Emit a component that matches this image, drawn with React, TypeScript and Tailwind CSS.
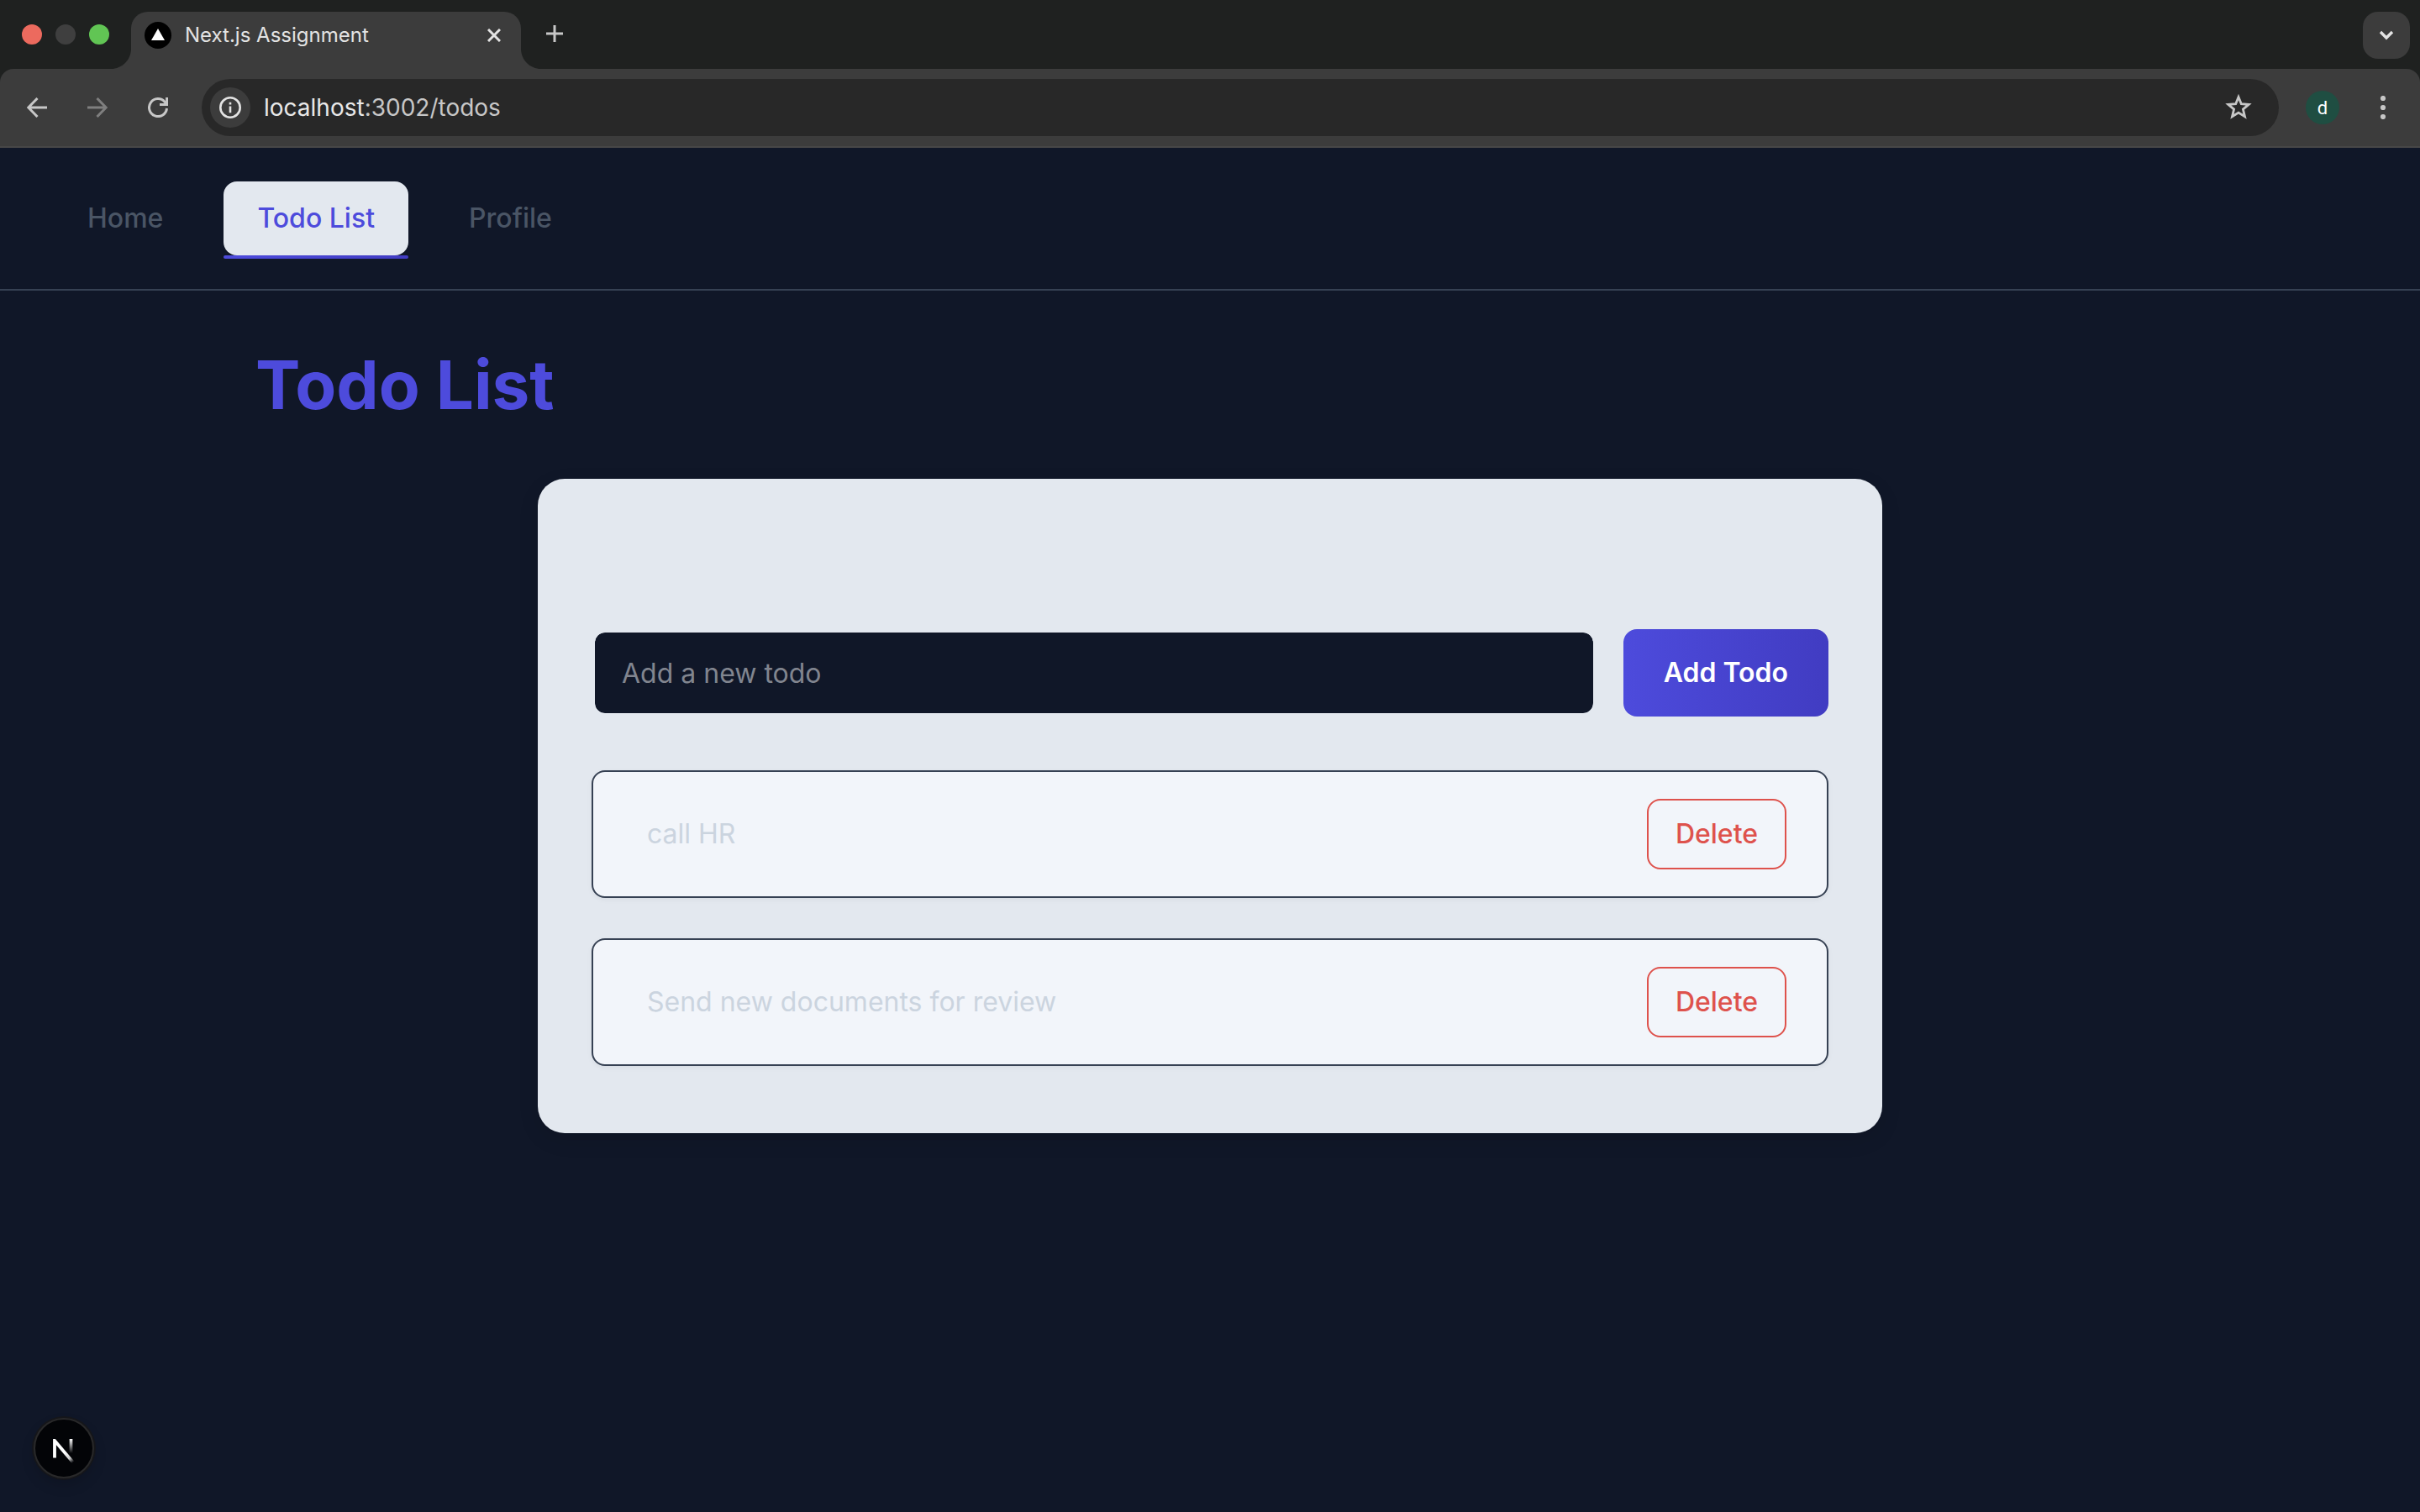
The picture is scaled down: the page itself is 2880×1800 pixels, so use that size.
import { useState } from "react";

const tool = "flex h-14 w-14 shrink-0 items-center justify-center rounded-full";

function TrafficLights() {
  return (
    <div className="flex shrink-0 items-center gap-4 pr-[26px] pl-[26px]">
      <span className="h-6 w-6 rounded-full bg-[#ec6a5e]" />
      <span className="h-6 w-6 rounded-full bg-[#3f3f3f]" />
      <span className="h-6 w-6 rounded-full bg-[#61c554]" />
    </div>
  );
}

function Flare({ flip = false }: { flip?: boolean }) {
  return (
    <svg
      aria-hidden="true"
      viewBox="0 0 24 24"
      className={flip ? "h-6 w-6 shrink-0 -scale-x-100 self-end text-[#3c3c3c]" : "h-6 w-6 shrink-0 self-end text-[#3c3c3c]"}
    >
      <path d="M24 0v24H0C13.3 24 24 13.3 24 0z" fill="currentColor" />
    </svg>
  );
}

function TabStrip() {
  return (
    <div className="flex h-[82px] items-stretch bg-[#1f2120]">
      <TrafficLights />
      <div className="-ml-6 flex">
        <Flare />
        <div className="mt-[14px] flex w-[464px] items-center rounded-t-[20px] bg-[#3c3c3c] pr-4 pb-3 pl-4 text-[#e3e3e3]">
          <svg aria-hidden="true" viewBox="0 0 32 32" className="h-8 w-8 shrink-0">
            <circle cx="16" cy="16" r="16" fill="#000" />
            <path d="M16 8l8 14H8z" fill="#fff" />
          </svg>
          <span className="ml-4 flex-1 text-2xl">Next.js Assignment</span>
          <button type="button" aria-label="Close tab" className="flex h-8 w-8 items-center justify-center">
            <svg viewBox="0 0 16 16" className="h-4 w-4">
              <path d="M1 1l14 14M15 1L1 15" stroke="currentColor" strokeWidth="3" />
            </svg>
          </button>
        </div>
        <Flare flip />
      </div>
      <button type="button" aria-label="New tab" className="flex h-20 w-8 items-center justify-center text-[#c7c7c7]">
        <svg viewBox="0 0 20 20" className="h-5 w-5">
          <path d="M10 0v20M0 10h20" stroke="currentColor" strokeWidth="3" />
        </svg>
      </button>
      <button
        type="button"
        aria-label="Search tabs"
        className="mt-[14px] mr-3 ml-auto flex h-14 w-14 items-center justify-center rounded-[18px] bg-[#3c3c3c] text-[#e3e3e3]"
      >
        <svg viewBox="0 0 18 12" className="h-3 w-[18px]">
          <path d="M2 2l7 7 7-7" fill="none" stroke="currentColor" strokeWidth="3.4" />
        </svg>
      </button>
    </div>
  );
}

function Toolbar() {
  return (
    <div className="bg-[#1f2120]">
      <div className="flex h-[94px] items-center rounded-t-[16px] border-b-2 border-[#474747] bg-[#3c3c3c] px-4">
        <button type="button" aria-label="Back" className={`${tool} text-[#c7c7c7]`}>
          <svg viewBox="0 0 24 24" className="h-6 w-6">
            <path d="M24 12H2.5M12.5 1L1.8 12l10.700 11" fill="none" stroke="currentColor" strokeWidth="3" />
          </svg>
        </button>
        <button type="button" aria-label="Forward" className={`${tool} ml-4 text-[#7f7f7f]`}>
          <svg viewBox="0 0 24 24" className="h-6 w-6">
            <path d="M0 12h21.500M11.500 1l10.700 11-10.700 11" fill="none" stroke="currentColor" strokeWidth="3" />
          </svg>
        </button>
        <button type="button" aria-label="Reload" className={`${tool} ml-4 text-[#c7c7c7]`}>
          <svg viewBox="0 0 24 24" className="h-6 w-6">
            <path d="M22.500 13A10.500 10.500 0 1 1 20 5.200L22 8" fill="none" stroke="currentColor" strokeWidth="3" />
            <path d="M22.600 0v8.500H14" fill="none" stroke="currentColor" strokeWidth="3" />
          </svg>
        </button>
        <div className="ml-6 flex h-[68px] flex-1 items-center rounded-full bg-[#282828] pr-8 pl-[10px]">
          <button type="button" aria-label="Site information" className="flex h-12 w-12 items-center justify-center rounded-full bg-[#3c3c3c] text-[#e3e3e3]">
            <svg viewBox="0 0 26 26" className="h-[26px] w-[26px]">
              <circle cx="13" cy="13" r="11.700" fill="none" stroke="currentColor" strokeWidth="2.600" />
              <path d="M13 11.500v7.700M13 6.800v2.800" stroke="currentColor" strokeWidth="2.600" />
            </svg>
          </button>
          <p className="ml-4 flex-1 text-[28px] text-[#c7c7c7]">
            <span className="text-[#e8e8e8]">localhost</span>:3002/todos
          </p>
          <button type="button" aria-label="Bookmark this tab" className="flex h-8 w-8 items-center justify-center text-[#c7c7c7]">
            <svg viewBox="0 0 32 32" className="h-8 w-8">
              <path
                d="M16 3.500l3.300 8.200 8.900.7-6.800 5.700 2.100 8.600L16 22.100l-7.500 4.600 2.100-8.600-6.800-5.700 8.900-.7z"
                fill="none"
                stroke="currentColor"
                strokeWidth="2.800"
              />
            </svg>
          </button>
        </div>
        <button type="button" aria-label="Account" className="ml-8 flex h-10 w-10 items-center justify-center rounded-full bg-[#1f4e42] font-['Roboto'] text-[22px] text-white">
          d
        </button>
        <button type="button" aria-label="Browser menu" className={`${tool} ml-6 text-[#c7c7c7]`}>
          <svg viewBox="0 0 28 28" className="h-7 w-7">
            <circle cx="14" cy="3" r="3.100" fill="currentColor" />
            <circle cx="14" cy="14" r="3.100" fill="currentColor" />
            <circle cx="14" cy="25" r="3.100" fill="currentColor" />
          </svg>
        </button>
      </div>
    </div>
  );
}

function Nav() {
  const link = "block px-10 py-5 text-[32px] leading-[48px] font-medium";
  return (
    <nav className="border-b-2 border-[#364153] px-16 py-10">
      <ul className="flex gap-8">
        <li>
          <a href="#home" className={`${link} text-[#4a5565]`}>Home</a>
        </li>
        <li className="relative">
          <a href="#todos" aria-current="page" className={`${link} rounded-2xl bg-[#e3e8ef] text-[#4d4bdc]`}>Todo List</a>
          <span className="absolute inset-x-0 top-full h-1 rounded-[2px] bg-linear-to-r from-[#4d4bdc] to-[#413cc2]" />
        </li>
        <li>
          <a href="#profile" className={`${link} text-[#4a5565]`}>Profile</a>
        </li>
      </ul>
    </nav>
  );
}

function TodoItem({ text, onDelete }: { text: string; onDelete: () => void }) {
  return (
    <li className="flex items-center justify-between rounded-2xl border-2 border-[#364153] bg-[#f2f5fa] px-12 py-8 shadow-[0_2px_6px_rgba(0,0,0,0.05)]">
      <span className="px-4 text-[32px] leading-[48px] text-[#cbd4df]">{text}</span>
      <button type="button" onClick={onDelete} className="rounded-2xl border-2 border-[#de524c] px-8 py-4 text-[32px] leading-[48px] font-medium text-[#de524c]">
        Delete
      </button>
    </li>
  );
}

export default function App() {
  const [todos, setTodos] = useState(["call HR", "Send new documents for review"]);
  const [draft, setDraft] = useState("");

  return (
    <div className="flex min-h-screen flex-col bg-[#101728] font-['Inter',sans-serif]">
      <header>
        <TabStrip />
        <Toolbar />
      </header>
      <Nav />
      <main className="mx-auto w-full max-w-[2400px] px-16 pt-16">
        <h1 className="text-[80px] leading-[96px] font-bold text-[#4d4bdc]">Todo List</h1>
        <section className="mx-auto mt-16 max-w-[1600px] rounded-[32px] bg-[#e3e8ef] px-16 pt-[179px] pb-20 shadow-[0_8px_24px_rgba(0,0,0,0.1)]">
          <form
            className="flex gap-8"
            onSubmit={(e) => {
              e.preventDefault();
              if (draft.trim()) setTodos([...todos, draft.trim()]);
              setDraft("");
            }}
          >
            <input
              type="text"
              aria-label="Add a new todo"
              placeholder="Add a new todo"
              value={draft}
              onChange={(e) => setDraft(e.target.value)}
              className="h-[104px] min-w-0 flex-1 rounded-2xl border-4 border-[#e3e8ef] bg-[#101728] bg-clip-padding px-8 text-[32px] text-white placeholder:text-[#81858f]"
            />
            <button type="submit" className="h-[104px] rounded-2xl bg-linear-to-r from-[#4d4bdc] to-[#413cc2] px-12 text-[32px] font-semibold text-white">
              Add Todo
            </button>
          </form>
          <ul className="mt-16 flex flex-col gap-12">
            {todos.map((text, i) => (
              <TodoItem key={text} text={text} onDelete={() => setTodos(todos.filter((_, j) => j !== i))} />
            ))}
          </ul>
        </section>
      </main>
      <button
        type="button"
        aria-label="Open Next.js dev tools"
        className="fixed bottom-10 left-10 h-[72px] w-[72px] rounded-full border-2 border-[#29292a] bg-[#030407] shadow-[0_0_0_2px_#15161a,0_8px_16px_rgba(0,0,0,0.15)]"
      >
        <svg viewBox="0 0 68 68" className="h-full w-full">
          <defs>
            <linearGradient id="diag" gradientUnits="userSpaceOnUse" x1="36" y1="38" x2="46" y2="50">
              <stop stopColor="#fff" />
              <stop offset="0.6" stopColor="#fff" stopOpacity="0.8" />
              <stop offset="1" stopColor="#fff" stopOpacity="0" />
            </linearGradient>
            <linearGradient id="stem" gradientUnits="userSpaceOnUse" x1="43" y1="23" x2="43" y2="40">
              <stop stopColor="#fff" />
              <stop offset="1" stopColor="#fff" stopOpacity="0" />
            </linearGradient>
            <clipPath id="cap">
              <rect x="20" y="23" width="30" height="30" />
            </clipPath>
          </defs>
          <path d="M23 45.500V25L45 51" fill="none" stroke="url(#diag)" strokeWidth="3.800" clipPath="url(#cap)" />
          <path d="M42.500 23v22" fill="none" stroke="url(#stem)" strokeWidth="3.700" />
        </svg>
      </button>
    </div>
  );
}
